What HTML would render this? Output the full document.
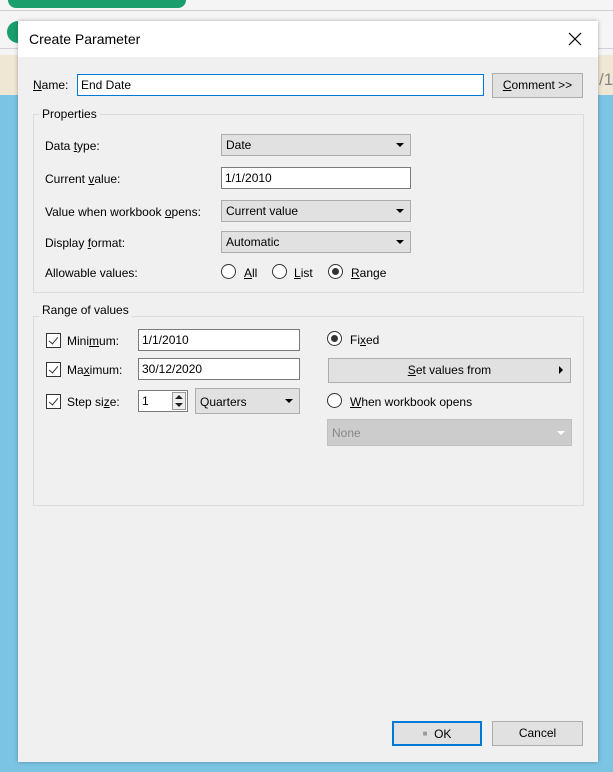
<!DOCTYPE html>
<html><head><style>
*{box-sizing:border-box;margin:0;padding:0}
body{width:613px;height:772px;position:relative;overflow:hidden;background:#7cc4e4;font-family:"Liberation Sans",sans-serif;font-size:12px;color:#000}
.a{position:absolute}
u{text-decoration:underline}
.dd{position:absolute;background:#e1e1e1;border:1px solid #adadad;height:22px;padding:3px 4px;line-height:14px}
.dd:after{content:"";position:absolute;right:6px;top:calc(50% - 2px);border-left:4px solid transparent;border-right:4px solid transparent;border-top:4px solid #000}
.dd.dis:after{border-top-color:#fff}
.tb{position:absolute;background:#fff;border:1px solid #7a7a7a;height:22px;padding:3px 3px;line-height:14px}
.rb{position:absolute;width:15px;height:15px;border:1px solid #333;border-radius:50%;background:#fff}
.rb.on:after{content:"";position:absolute;left:3px;top:3px;width:7px;height:7px;border-radius:50%;background:#333}
.cb{position:absolute;width:15px;height:15px;border:1px solid #333;background:#fff}
.cb:after{content:"";position:absolute;left:4px;top:1px;width:4px;height:8px;border:solid #333;border-width:0 1.5px 1.5px 0;transform:rotate(40deg)}
.btn{position:absolute;background:#e1e1e1;border:1px solid #adadad;height:25px;text-align:center;line-height:23px}
.grp{position:absolute;border:1px solid #dcdcdc}
</style></head><body>
<div class="a" style="left:0;top:0;width:613px;height:55px;background:#f5f5f5"></div>
<div class="a" style="left:0;top:10px;width:613px;height:1px;background:#d0d0d0"></div>
<div class="a" style="left:0;top:48px;width:613px;height:1px;background:#d0d0d0"></div>
<div class="a" style="left:8px;top:-8px;width:178px;height:16px;background:#1a9f6c;border-radius:8px"></div>
<div class="a" style="left:7px;top:21px;width:30px;height:22px;background:#1a9f6c;border-radius:11px"></div>
<div class="a" style="left:0;top:55px;width:613px;height:40px;background:#efe6d4"></div>
<div class="a" style="left:599px;top:70px;color:#888;font-size:17px">/1</div>
<div class="a" style="left:18px;top:21px;width:580px;height:741px;background:#f0f0f0;box-shadow:0 0 4px rgba(0,0,0,.3)">
<div class="a" style="left:0;top:0;width:580px;height:36px;background:#fff"></div>
<div class="a" style="left:11px;top:10px;font-size:14px">Create Parameter</div>
<svg class="a" style="left:550px;top:11px" width="14" height="14"><path d="M1 1L13 13M13 1L1 13" stroke="#000" stroke-width="1.2"/></svg>
<div class="a" style="left:15px;top:57px"><u>N</u>ame:</div>
<div class="tb" style="left:59px;top:53px;width:407px;border-color:#0078d7">End Date</div>
<div class="btn" style="left:474px;top:52px;width:91px"><u>C</u>omment &gt;&gt;</div>
<div class="grp" style="left:15px;top:93px;width:551px;height:179px"></div>
<div class="a" style="left:21px;top:86px;background:#f0f0f0;padding:0 3px">Properties</div>
<div class="a" style="left:27px;top:118px">Data <u>t</u>ype:</div>
<div class="dd" style="left:203px;top:113px;width:190px">Date</div>
<div class="a" style="left:27px;top:151px">Current <u>v</u>alue:</div>
<div class="tb" style="left:203px;top:146px;width:190px">1/1/2010</div>
<div class="a" style="left:27px;top:184px">Value when workbook <u>o</u>pens:</div>
<div class="dd" style="left:203px;top:179px;width:190px">Current value</div>
<div class="a" style="left:27px;top:215px">Display <u>f</u>ormat:</div>
<div class="dd" style="left:203px;top:210px;width:190px">Automatic</div>
<div class="a" style="left:27px;top:245px">Allowable values:</div>
<div class="rb" style="left:203px;top:243px"></div><div class="a" style="left:226px;top:245px"><u>A</u>ll</div>
<div class="rb" style="left:254px;top:243px"></div><div class="a" style="left:276px;top:245px"><u>L</u>ist</div>
<div class="rb on" style="left:310px;top:243px"></div><div class="a" style="left:333px;top:245px"><u>R</u>ange</div>
<div class="grp" style="left:15px;top:295px;width:551px;height:190px"></div>
<div class="a" style="left:21px;top:282px;background:#f0f0f0;padding:0 3px">Range of values</div>
<div class="cb" style="left:28px;top:312px"></div><div class="a" style="left:49px;top:313px">Mini<u>m</u>um:</div>
<div class="tb" style="left:120px;top:308px;width:162px">1/1/2010</div>
<div class="cb" style="left:28px;top:341px"></div><div class="a" style="left:49px;top:342px">Ma<u>x</u>imum:</div>
<div class="tb" style="left:120px;top:337px;width:162px">30/12/2020</div>
<div class="cb" style="left:28px;top:373px"></div><div class="a" style="left:49px;top:374px">Step si<u>z</u>e:</div>
<div class="tb" style="left:120px;top:369px;width:50px">1</div>
<svg class="a" style="left:154px;top:371px" width="14" height="18"><rect x="0.5" y="0.5" width="13" height="17" fill="#eee" stroke="#999"/><path d="M3 7L7 3L11 7ZM3 11L7 15L11 11Z" fill="#222"/></svg>
<div class="dd" style="left:177px;top:367px;width:105px;height:26px;padding-top:6px">Quarters</div>
<div class="rb on" style="left:309px;top:310px"></div><div class="a" style="left:332px;top:312px">Fi<u>x</u>ed</div>
<div class="btn" style="left:310px;top:337px;width:243px;height:25px"><u>S</u>et values from</div>
<svg class="a" style="left:540px;top:345px" width="6" height="8"><path d="M1 0L5 4L1 8Z" fill="#000"/></svg>
<div class="rb" style="left:309px;top:372px"></div><div class="a" style="left:332px;top:374px"><u>W</u>hen workbook opens</div>
<div class="dd dis" style="left:309px;top:398px;width:245px;height:27px;padding-top:6px;color:#888;background:#ccc;border-color:#c0c0c0">None</div>
<div class="btn" style="left:374px;top:700px;width:90px;border:2px solid #0078d7;line-height:21px"><span style="color:#999;font-size:8px;vertical-align:2px">■</span>&nbsp;&nbsp;OK</div>
<div class="btn" style="left:474px;top:700px;width:91px">Cancel</div>
</div>
</body></html>
